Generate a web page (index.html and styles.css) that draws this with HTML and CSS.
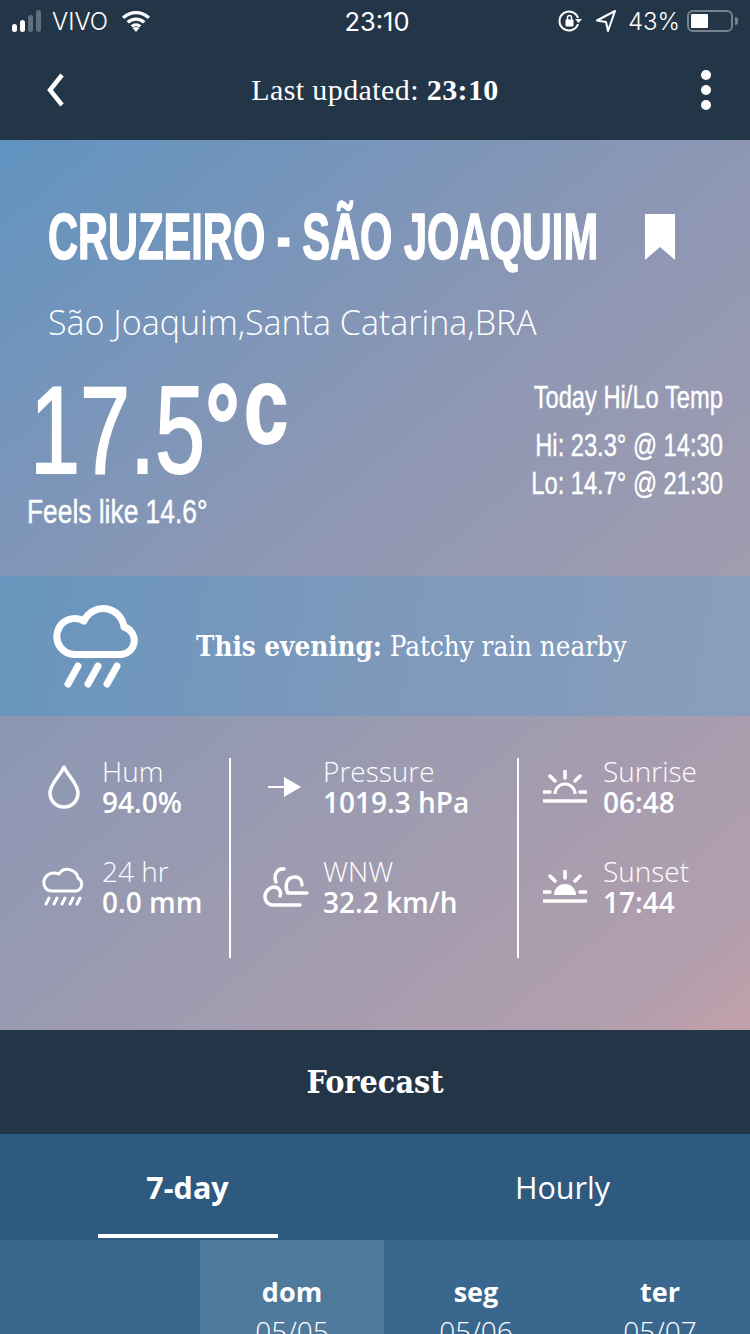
FILE: index.html
```html
<!DOCTYPE html>
<html lang="en">
<head>
    <meta charset="UTF-8">
    <meta name="viewport" content="width=device-width, initial-scale=1.0">
    <title>Cruzeiro - São Joaquim</title>
    <link rel="stylesheet" href="styles.css">
</head>
<body>
    <div class="screen">
        <header class="top">
            <div class="status">
                <div class="status-left">
                    <svg class="signal" width="30" height="22" viewBox="0 0 30 22"><rect x="0" y="14" width="5" height="8" rx="2.5" fill="#fff"/><rect x="8" y="10" width="5" height="12" rx="2.5" fill="#fff"/><rect x="16" y="5" width="5" height="17" rx="2.5" fill="#5f6f7e"/><rect x="24" y="0" width="5" height="22" rx="2.5" fill="#5f6f7e"/></svg>
                    <span>VIVO</span>
                    <svg class="wifi" width="30" height="22" viewBox="0 0 32 24"><path d="M2 8.5a20 20 0 0 1 28 0M7 13.5a13 13 0 0 1 18 0M11.5 18a6.500 6.500 0 0 1 9 0" fill="none" stroke="#fff" stroke-width="3.600"/><path d="M16 24l-3.500-4a5 5 0 0 1 7 0z" fill="#fff"/></svg>
                </div>
                <div class="status-time">23:10</div>
                <div class="status-right">
                    <svg width="24" height="24" viewBox="0 0 24 24"><path d="M20 15a9.500 9.500 0 1 1 0-6" fill="none" stroke="#fff" stroke-width="2"/><path d="M17 10h7l-3.500 4z" fill="#fff"/><rect x="7.500" y="10.500" width="8" height="7" rx="1" fill="#fff"/><path d="M9.500 11V8.500a2 2 0 0 1 4 0V11" fill="none" stroke="#fff" stroke-width="1.500"/></svg>
                    <svg class="arrow-loc" width="22" height="24" viewBox="0 0 22 24"><path d="M20 2L2 11.500l9 1.500 2 9z" fill="none" stroke="#fff" stroke-width="2" stroke-linejoin="round"/></svg>
                    <span>43%</span>
                    <div class="battery"><div class="battery-fill"></div></div>
                    <div class="battery-tip"></div>
                </div>
            </div>
            <nav class="nav">
                <svg width="20" height="34" viewBox="0 0 20 34"><path d="M16 2L4 17l12 15" fill="none" stroke="#fff" stroke-width="4.500"/></svg>
                <div class="nav-title">Last updated: <b>23:10</b></div>
                <div class="dots"><i></i><i></i><i></i></div>
            </nav>
        </header>

        <section class="weather">
            <div class="hero">
                <div class="station">
                    <div class="station-name"><h1>CRUZEIRO - SÃO JOAQUIM</h1></div>
                    <svg width="30" height="46" viewBox="0 0 30 46"><path d="M0 0h30v46L15 33 0 46z" fill="#fff"/></svg>
                </div>
                <div class="place">São Joaquim,Santa Catarina,BRA</div>
                <div class="temps">
                    <div class="temp-now">
                        <div class="temp">17.5<span class="deg">°</span><span class="unit">c</span></div>
                        <div class="feels">Feels like 14.6°</div>
                    </div>
                    <div class="hilo">
                        <div class="hilo-title">Today Hi/Lo Temp</div>
                        <div>Hi: 23.3° @ 14:30</div>
                        <div>Lo: 14.7° @ 21:30</div>
                    </div>
                </div>
            </div>

            <div class="summary">
                <svg width="88" height="84" viewBox="0 0 88 84"><path d="M22 50.500H67A14 14 0 0 0 71 23A21 21 0 0 0 31 17A18 18 0 1 0 22 50.500Z" fill="none" stroke="#fff" stroke-width="7" stroke-linejoin="round"/><path d="M25 62L15 80M45 62L35 80M64 62L54 80" fill="none" stroke="#fff" stroke-width="7" stroke-linecap="round"/></svg>
                <p><b>This evening:</b> Patchy rain nearby</p>
            </div>

            <div class="details">
                <div class="col col-a">
                    <div class="item">
                        <div class="ico ico-drop"><svg width="34" height="46" viewBox="0 0 34 46"><path d="M17 3C13 12 3 20 3 29a14 14 0 0 0 28 0C31 20 21 12 17 3z" fill="none" stroke="#fff" stroke-width="3.500" stroke-linejoin="round"/></svg></div>
                        <div class="txt"><span>Hum</span><b>94.0%</b></div>
                    </div>
                    <div class="item">
                        <div class="ico"><svg width="44" height="42" viewBox="0 0 44 42"><path d="M10 25h24a7 7 0 0 0 2-13C34 3 22 0 17 8 10 5 3 9 2 15c-1 6 3 10 8 10z" fill="none" stroke="#fff" stroke-width="3" stroke-linejoin="round"/><path d="M7 32l-3 6M15 32l-3 6M23 32l-3 6M31 32l-3 6M38 32l-3 6" fill="none" stroke="#fff" stroke-width="3" stroke-linecap="round"/></svg></div>
                        <div class="txt"><span>24 hr</span><b>0.0 mm</b></div>
                    </div>
                </div>
                <div class="col col-b">
                    <div class="item">
                        <div class="ico ico-arrow"><svg width="34" height="22" viewBox="0 0 34 22"><path d="M0 11h18" stroke="#fff" stroke-width="2"/><path d="M16 1l17 10-17 10z" fill="#fff"/></svg></div>
                        <div class="txt"><span>Pressure</span><b>1019.3 hPa</b></div>
                    </div>
                    <div class="item">
                        <div class="ico ico-wind"><svg width="46" height="42" viewBox="0 0 46 42"><path d="M21 3C15 2 10 8 13 16M44 27H25C22 22 22 11 32 11C37 11 39 15 39 19M37 39H10C5 39 2 35 2 31C2 25 7 21 11 21C15 21 19 25 17 30" fill="none" stroke="#fff" stroke-width="3.500" stroke-linecap="round"/></svg></div>
                        <div class="txt"><span>WNW</span><b>32.2 km/h</b></div>
                    </div>
                </div>
                <div class="col col-c">
                    <div class="item">
                        <div class="ico"><svg width="44" height="34" viewBox="0 0 44 34"><path d="M22 1v7M7 6l5 5M37 6l-5 5M1 22h6M37 22h6M1 31h42" fill="none" stroke="#fff" stroke-width="3.500" stroke-linecap="round"/><path d="M12 24a10 10 0 0 1 20 0" fill="none" stroke="#fff" stroke-width="3"/></svg></div>
                        <div class="txt"><span>Sunrise</span><b>06:48</b></div>
                    </div>
                    <div class="item">
                        <div class="ico"><svg width="44" height="34" viewBox="0 0 44 34"><path d="M22 1v7M7 6l5 5M37 6l-5 5M1 22h6M37 22h6M1 31h42" fill="none" stroke="#fff" stroke-width="3.500" stroke-linecap="round"/><path d="M11 25a11 11 0 0 1 22 0z" fill="#fff"/></svg></div>
                        <div class="txt"><span>Sunset</span><b>17:44</b></div>
                    </div>
                </div>
            </div>
        </section>

        <div class="forecast-head">Forecast</div>
        <div class="tabs">
            <div class="tab active">7-day</div>
            <div class="tab">Hourly</div>
        </div>
        <div class="days">
            <div class="day-spacer"></div>
            <div class="day today"><b>dom</b><span>05/05</span></div>
            <div class="day"><b>seg</b><span>05/06</span></div>
            <div class="day"><b>ter</b><span>05/07</span></div>
        </div>
    </div>
</body>
</html>
```

FILE: styles.css
```css
* {
    box-sizing: border-box;
}
html, body {
    margin: 0;
    padding: 0;
}
body {
    font-family: "Open Sans", "Liberation Sans", sans-serif;
    color: #fff;
    background: #233647;
}
.screen {
    width: 750px;
    height: 1334px;
    overflow: hidden;
}
.top {
    height: 140px;
    background: #233647;
}
.status {
    height: 40px;
    display: flex;
    justify-content: space-between;
    align-items: center;
    padding: 2px 12px 0 12px;
    position: relative;
    font-family: "Inter", "Liberation Sans", sans-serif;
    font-size: 24px;
    font-weight: 300;
}
.status-left, .status-right {
    display: flex;
    align-items: center;
}
.status-left span {
    margin-left: 10px;
}
.wifi {
    margin-left: 13px;
}
.status-time {
    position: absolute;
    left: 4px;
    right: 0;
    text-align: center;
    font-size: 25.5px;
    font-weight: 400;
}
.arrow-loc {
    margin-left: 13px;
}
.status-right span {
    margin-left: 11px;
}
.battery {
    width: 46px;
    height: 22px;
    margin-left: 7px;
    border: 2px solid #76838f;
    border-radius: 6px;
    padding: 2px;
}
.battery-fill {
    width: 17px;
    height: 14px;
    background: #fff;
    border-radius: 1px;
}
.battery-tip {
    width: 3px;
    height: 8px;
    margin-left: 2px;
    background: #76838f;
    border-radius: 0 3px 3px 0;
}
.nav {
    height: 100px;
    display: flex;
    align-items: center;
    justify-content: space-between;
    padding: 0 39px 0 46px;
    position: relative;
}
.nav-title {
    position: absolute;
    left: 0;
    right: 0;
    text-align: center;
    font-family: "Liberation Serif", serif;
    font-size: 30px;
    letter-spacing: 0.4px;
}
.dots {
    display: flex;
    flex-direction: column;
    gap: 5px;
}
.dots i {
    display: block;
    width: 10px;
    height: 10px;
    border-radius: 50%;
    background: #fff;
}
.weather {
    height: 890px;
    background: linear-gradient(140deg, #6193c0 0%, #8d97b4 41%, #9d9bb0 64%, #b29ead 92%, #c2a0aa 100%);
}
.hero {
    height: 436px;
    padding-top: 62px;
}
.station {
    display: flex;
    align-items: center;
    padding-left: 48px;
    height: 70px;
}
.station-name {
    width: 597px;
}
.station h1 {
    margin: 0;
    font-family: "Liberation Sans", sans-serif;
    font-size: 65px;
    font-weight: 700;
    line-height: 70px;
    white-space: nowrap;
    transform: scaleX(0.64);
    transform-origin: left center;
    -webkit-text-stroke: 1.5px #fff;
}
.place {
    margin: 28px 0 0 48px;
    font-size: 34px;
    font-weight: 300;
    line-height: 44px;
}
.temps {
    display: flex;
    justify-content: space-between;
    padding: 0 27px;
}
.temp-now {
    padding-top: 21px;
}
.temp {
    font-family: "Liberation Sans", sans-serif;
    font-size: 125px;
    line-height: 130px;
    height: 126px;
    margin-left: 3px;
    white-space: nowrap;
    transform: scaleX(0.72);
    transform-origin: left center;
    -webkit-text-stroke: 2px #fff;
}
.deg {
    font-size: 120px;
    font-weight: 700;
    line-height: 0;
    vertical-align: 5px;
}
.unit {
    font-size: 110px;
    font-weight: 700;
    line-height: 0;
    vertical-align: 30px;
    margin-left: 6px;
}
.feels {
    font-family: "Liberation Sans", sans-serif;
    font-size: 34px;
    line-height: 40px;
    white-space: nowrap;
    transform: scaleX(0.775);
    transform-origin: left center;
    -webkit-text-stroke: 0.4px #fff;
}
.hilo {
    padding-top: 34px;
    text-align: right;
    font-family: "Liberation Sans", sans-serif;
    font-size: 32px;
    line-height: 38px;
    white-space: nowrap;
    transform: scaleX(0.74);
    transform-origin: right center;
    -webkit-text-stroke: 0.4px #fff;
}
.hilo-title {
    margin-bottom: 10px;
}
.summary {
    height: 140px;
    display: flex;
    align-items: center;
    padding-left: 53px;
    background: linear-gradient(100deg, #6895bd 0%, #7d99bb 50%, #8a9ebc 100%);
}
.summary p {
    margin: 0 0 0 55px;
    font-family: "DejaVu Serif Condensed", "DejaVu Serif", serif;
    font-size: 27.5px;
}
.details {
    display: flex;
    padding-top: 42px;
}
.col {
    height: 200px;
}
.col-a {
    width: 231px;
    border-right: 2px solid #fff;
    padding-left: 42px;
}
.col-b {
    width: 288px;
    border-right: 2px solid #fff;
    padding-left: 30px;
}
.col-c {
    padding-left: 24px;
}
.item {
    display: flex;
    align-items: center;
    height: 100px;
    padding-bottom: 42px;
}
.ico {
    width: 60px;
    flex: none;
    display: flex;
    justify-content: flex-start;
}
.col-b .ico {
    width: 62px;
}
.ico-drop svg {
    margin-left: 5px;
}
.ico-arrow svg {
    margin-left: 7px;
}
.ico-wind svg {
    margin-left: 2px;
}
.txt {
    display: flex;
    flex-direction: column;
}
.txt span {
    font-size: 28px;
    font-weight: 300;
    line-height: 30px;
}
.txt b {
    font-size: 28px;
    font-weight: 600;
    line-height: 32px;
    white-space: nowrap;
}
.forecast-head {
    height: 104px;
    display: flex;
    align-items: center;
    justify-content: center;
    font-family: "DejaVu Serif Condensed", "DejaVu Serif", serif;
    font-size: 32px;
    font-weight: 700;
}
.tabs {
    height: 106px;
    display: flex;
    background: #2e5a80;
    padding: 0 0 2px;
}
.tab {
    width: 375px;
    display: flex;
    align-items: center;
    justify-content: center;
    font-size: 30.5px;
    padding-top: 2px;
    position: relative;
}
.tab.active {
    font-weight: 700;
}
.tab.active::after {
    content: "";
    position: absolute;
    left: 98px;
    bottom: 0;
    width: 180px;
    height: 4px;
    background: #fff;
}
.days {
    height: 94px;
    display: flex;
    background: #3a678e;
}
.day-spacer {
    width: 200px;
    flex: none;
}
.day {
    width: 184px;
    flex: none;
    padding-top: 33px;
    display: flex;
    flex-direction: column;
    align-items: center;
}
.day.today {
    background: #4f7a9c;
}
.day b {
    font-size: 27px;
    line-height: 38px;
}
.day span {
    font-size: 28px;
    font-weight: 300;
    line-height: 40px;
}
```
